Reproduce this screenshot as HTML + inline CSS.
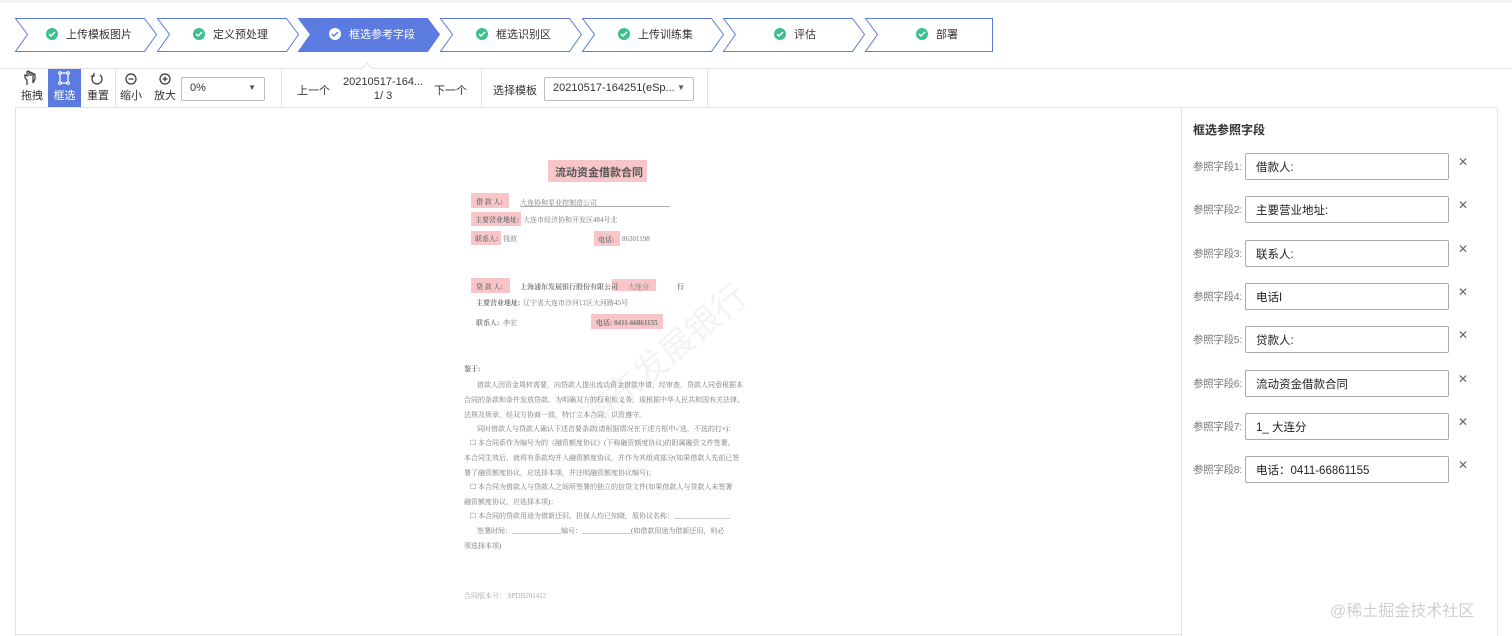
<!DOCTYPE html>
<html><head><meta charset="utf-8"><style>
*{margin:0;padding:0;box-sizing:border-box}
body{width:1512px;height:636px;background:#fff;font-family:"Liberation Sans","Noto Sans CJK SC",sans-serif;color:#333;position:relative;overflow:hidden;font-size:12px}
.a{position:absolute;white-space:nowrap}
.tb{font-size:11px;color:#333;text-align:center;line-height:14px}
.sep{position:absolute;top:69px;height:38px;width:1px;background:#e2e2e2}
.sel{position:absolute;border:1px solid #bbb;border-radius:2px;height:24px;font-size:11px;padding:4px 8px;background:#fff}
.sel:after{content:"▼";position:absolute;right:8px;top:5px;font-size:8px;color:#555}
.lab{position:absolute;left:1193px;font-size:10.5px;color:#777;letter-spacing:-0.3px}
.inp{position:absolute;left:1245px;width:204px;height:27px;border:1px solid #aaa;border-radius:2px;font-size:11.5px;color:#222;padding:5px 10px}
.x{position:absolute;left:1458px;font-size:12px;color:#666}
.d{position:absolute;font-family:"Liberation Serif","Noto Serif CJK SC",serif;font-size:7px;color:#777;white-space:nowrap}
.pk{position:absolute;background:#f8c6c9}
</style></head><body>
<div class="a" style="left:0;top:0;width:1512px;height:3px;background:#f3f3f3"></div>
<svg class="a" style="left:0;top:0" width="1000" height="60">
<g stroke="#5b7be0" stroke-width="1" fill="#fff">
<polygon points="15.5,18.5 144.5,18.5 156.5,34.5 144.5,51.5 15.5,51.5 27.5,34.5"/>
<polygon points="157.5,18.5 286.5,18.5 298.5,34.5 286.5,51.5 157.5,51.5 169.5,34.5"/>
<polygon points="298.5,18.5 427.5,18.5 439.5,34.5 427.5,51.5 298.5,51.5 310.5,34.5" fill="#5b7be0"/>
<polygon points="440.5,18.5 569.5,18.5 581.5,34.5 569.5,51.5 440.5,51.5 452.5,34.5"/>
<polygon points="582.5,18.5 711.5,18.5 723.5,34.5 711.5,51.5 582.5,51.5 594.5,34.5"/>
<polygon points="723.5,18.5 852.5,18.5 864.5,34.5 852.5,51.5 723.5,51.5 735.5,34.5"/>
<polygon points="865.5,18.5 992.5,18.5 992.5,51.5 865.5,51.5 877.5,34.5"/>
</g>
<g font-size="11" fill="#333" font-family="Liberation Sans,Noto Sans CJK SC,sans-serif">
<circle cx="52" cy="34" r="6" fill="#3cc08c"/><text x="66" y="38">上传模板图片</text>
<circle cx="199" cy="34" r="6" fill="#3cc08c"/><text x="213" y="38">定义预处理</text>
<circle cx="335" cy="34" r="6" fill="#fff"/><text x="349" y="38" fill="#fff">框选参考字段</text>
<circle cx="482" cy="34" r="6" fill="#3cc08c"/><text x="496" y="38">框选识别区</text>
<circle cx="624" cy="34" r="6" fill="#3cc08c"/><text x="638" y="38">上传训练集</text>
<circle cx="780" cy="34" r="6" fill="#3cc08c"/><text x="794" y="38">评估</text>
<circle cx="922" cy="34" r="6" fill="#3cc08c"/><text x="936" y="38">部署</text>
</g>
<g stroke="#fff" stroke-width="1.5" fill="none">
<path d="M49,34 l2,2 l4,-4"/><path d="M196,34 l2,2 l4,-4"/><path d="M332,34 l2,2 l4,-4" stroke="#5b7be0"/><path d="M479,34 l2,2 l4,-4"/><path d="M621,34 l2,2 l4,-4"/><path d="M777,34 l2,2 l4,-4"/><path d="M919,34 l2,2 l4,-4"/>
</g>
</svg>
<div class="a" style="left:0;top:68px;width:1512px;height:1px;background:#e2e2e2"></div>
<div class="a" style="left:363px;top:64px;width:8px;height:8px;background:#fff;border-left:1px solid #e2e2e2;border-top:1px solid #e2e2e2;transform:rotate(45deg)"></div>
<div class="a" style="left:48px;top:69px;width:33px;height:38px;background:#5b7be0"></div>
<svg class="a" style="left:0;top:69px" width="190" height="20" fill="none" stroke="#333" stroke-width="1.2">
<path d="M27,16 v-5 l-2,-2 v-3 l2,1 v-4 a1,1 0 0 1 2,0 v4 m0,-3 a1,1 0 0 1 2,0 v3 m0,-2 a1,1 0 0 1 2,0 v2 m0,-1 a1,1 0 0 1 2,0 v4 l-2,4 z"/>
<g stroke="#fff"><path d="M61,4 h6 M61,14 h6 M60,5 v8 M68,5 v8"/><circle cx="60" cy="4" r="1.3"/><circle cx="68" cy="4" r="1.3"/><circle cx="60" cy="14" r="1.3"/><circle cx="68" cy="14" r="1.3"/></g>
<path d="M94,6 a5,5 0 1 0 6,0 M94,4 v3 h-3"/>
<circle cx="131" cy="10" r="5"/><path d="M128.5,10 h5"/>
<circle cx="165" cy="10" r="5"/><path d="M162.5,10 h5 M165,7.5 v5"/>
</svg>
<div class="a tb" style="left:18px;top:89px;width:28px">拖拽</div>
<div class="a tb" style="left:48px;top:89px;width:33px;color:#fff">框选</div>
<div class="a tb" style="left:84px;top:89px;width:28px">重置</div>
<div class="sep" style="left:115px"></div>
<div class="a tb" style="left:118px;top:89px;width:26px">缩小</div>
<div class="a tb" style="left:151px;top:89px;width:28px">放大</div>
<div class="sel" style="left:181px;top:77px;width:84px">0%</div>
<div class="sep" style="left:281px"></div>
<div class="a" style="left:297px;top:82px;font-size:11px">上一个</div>
<div class="a" style="left:343px;top:75px;font-size:11px;text-align:center;line-height:14px">20210517-164...<br>1/ 3</div>
<div class="a" style="left:434px;top:82px;font-size:11px">下一个</div>
<div class="sep" style="left:481px"></div>
<div class="a" style="left:493px;top:82px;font-size:11px">选择模板</div>
<div class="sel" style="left:544px;top:77px;width:150px">20210517-164251(eSp...</div>
<div class="sep" style="left:707px"></div>
<div class="a" style="left:15px;top:107px;width:1483px;height:1px;background:#e2e2e2"></div>
<div class="a" style="left:15px;top:107px;width:1px;height:529px;background:#e2e2e2"></div>
<div class="a" style="left:1181px;top:107px;width:1px;height:529px;background:#e2e2e2"></div>
<div class="a" style="left:1497px;top:107px;width:1px;height:529px;background:#e8e8e8"></div>
<div class="a" style="left:15px;top:634px;width:1167px;height:1px;background:#e2e2e2"></div>

<div class="a" style="left:560px;top:330px;font-size:34px;color:#f3f3f3;transform:rotate(-40deg);font-family:'Noto Sans CJK SC',sans-serif">浦东发展银行</div>
<div class="pk" style="left:548px;top:160px;width:99px;height:22px"></div>
<div class="a" style="left:555px;top:164px;font-size:11px;font-weight:bold;color:#555">流动资金借款合同</div>
<div class="pk" style="left:471px;top:193px;width:38px;height:15px"></div>
<div class="pk" style="left:471px;top:212px;width:50px;height:14px"></div>
<div class="pk" style="left:471px;top:231px;width:30px;height:14px"></div>
<div class="pk" style="left:594px;top:231px;width:26px;height:15px"></div>
<div class="pk" style="left:471px;top:278px;width:39px;height:15px"></div>
<div class="pk" style="left:612px;top:279px;width:44px;height:12px"></div>
<div class="pk" style="left:591px;top:314px;width:72px;height:15px"></div>
<div class="d" style="left:476px;top:197px;font-weight:bold">借 款 人:</div><div class="d" style="left:520px;top:198px">大连协和泵业控制造公司</div>
<div class="a" style="left:520px;top:206px;width:150px;height:1px;background:#aaa"></div>
<div class="d" style="left:475px;top:215px;font-weight:bold">主要营业地址:</div><div class="d" style="left:523px;top:215px">大连市经济协和开发区484号北</div>
<div class="d" style="left:475px;top:234px;font-weight:bold">联系人:</div><div class="d" style="left:503px;top:234px">钱波</div>
<div class="d" style="left:598px;top:235px;font-weight:bold">电话:</div><div class="d" style="left:622px;top:235px">86301198</div>
<div class="d" style="left:476px;top:282px;font-weight:bold">贷 款 人:</div><div class="d" style="left:520px;top:282px;font-weight:bold">上海浦东发展银行股份有限公司</div><div class="d" style="left:628px;top:282px">大连分</div><div class="d" style="left:677px;top:282px;font-weight:bold">行</div>
<div class="d" style="left:476px;top:298px;font-weight:bold">主要营业地址:</div><div class="d" style="left:523px;top:298px">辽宁省大连市沙河口区大河路45号</div>
<div class="d" style="left:476px;top:318px;font-weight:bold">联系人:</div><div class="d" style="left:503px;top:318px">李宏</div>
<div class="d" style="left:596px;top:318px;font-weight:bold">电话: 0411-66861155</div>
<div class="d" style="left:464px;top:364px;font-weight:bold">鉴于:</div>
<div class="d" style="left:477px;top:380px">借款人因资金周转需要，向贷款人提出流动资金借款申请，经审查，贷款人同意根据本</div>
<div class="d" style="left:464px;top:395px">合同的条款和条件发放贷款。为明确双方的权利和义务，现根据中华人民共和国有关法律、</div>
<div class="d" style="left:464px;top:410px">法规及规章，经双方协商一致，特订立本合同，以资遵守。</div>
<div class="d" style="left:477px;top:424px">同时借款人与贷款人确认下述首要条款(请根据情况在下述方框中✓选，不选的打×)：</div>
<div class="d" style="left:470px;top:438px">☐ 本合同系作为编号为的《融资额度协议》(下称融资额度协议)的附属融资文件签署。</div>
<div class="d" style="left:464px;top:453px">本合同生效后，就将有条款均并入融资额度协议，并作为其组成部分(如果借款人先前已签</div>
<div class="d" style="left:464px;top:468px">署了融资额度协议，应选择本项，并注明融资额度协议编号)；</div>
<div class="d" style="left:470px;top:482px">☐ 本合同为借款人与贷款人之间所签署的独立的信贷文件(如果借款人与贷款人未签署</div>
<div class="d" style="left:464px;top:497px">融资额度协议，应选择本项)；</div>
<div class="d" style="left:470px;top:511px">☐ 本合同的贷款用途为借新还旧，担保人均已知晓，原协议名称：________________</div>
<div class="d" style="left:477px;top:526px">签署时间：______________编号：______________(如借款用途为借新还旧，则必</div>
<div class="d" style="left:464px;top:541px">须选择本项)</div>
<div class="d" style="left:464px;top:591px;color:#aaa">合同版本号： SPDB201412</div>

<div class="a" style="left:1193px;top:121px;font-size:12px;font-weight:bold;color:#333">框选参照字段</div>
<div class="lab" style="top:159px">参照字段1:</div><div class="inp" style="top:153px">借款人:</div><div class="x" style="top:155px">✕</div>
<div class="lab" style="top:202px">参照字段2:</div><div class="inp" style="top:196px">主要营业地址:</div><div class="x" style="top:198px">✕</div>
<div class="lab" style="top:246px">参照字段3:</div><div class="inp" style="top:240px">联系人:</div><div class="x" style="top:242px">✕</div>
<div class="lab" style="top:289px">参照字段4:</div><div class="inp" style="top:283px">电话I</div><div class="x" style="top:285px">✕</div>
<div class="lab" style="top:332px">参照字段5:</div><div class="inp" style="top:326px">贷款人:</div><div class="x" style="top:328px">✕</div>
<div class="lab" style="top:376px">参照字段6:</div><div class="inp" style="top:370px">流动资金借款合同</div><div class="x" style="top:372px">✕</div>
<div class="lab" style="top:419px">参照字段7:</div><div class="inp" style="top:413px">1_ 大连分</div><div class="x" style="top:415px">✕</div>
<div class="lab" style="top:462px">参照字段8:</div><div class="inp" style="top:456px">电话：0411-66861155</div><div class="x" style="top:458px">✕</div>
<div class="a" style="left:1330px;top:597px;font-size:16px;color:#d0d0d0">@稀土掘金技术社区</div>
</body></html>
